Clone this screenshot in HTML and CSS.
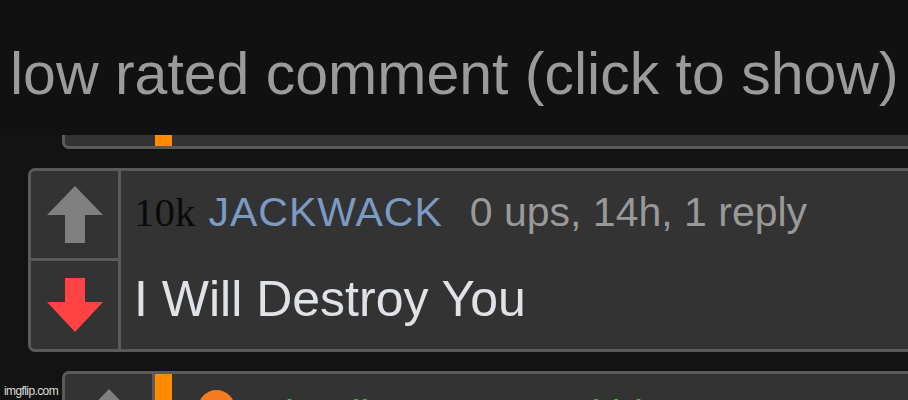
FILE: index.html
```html
<!DOCTYPE html>
<html lang="en">
<head>
    <meta charset="UTF-8">
    <title>Comments</title>
    <link rel="stylesheet" href="styles.css">
</head>
<body>

    <!-- collapsed comment bar -->
    <div class="hidden-bar">low rated comment (click to show)</div>

    <!-- bottom of the reply above -->
    <div class="card-tail">
        <div class="tail-vote"></div>
        <div class="thread-mark"></div>
    </div>

    <!-- comment -->
    <div class="com">
        <div class="vote">
            <div class="vote-btn">
                <svg width="56" height="57" viewBox="0 0 56 57"><polygon points="28,0 56,29 38,29 38,57 18,57 18,29 0,29" fill="#808080"/></svg>
            </div>
            <div class="vote-btn down">
                <svg width="56" height="54" viewBox="0 0 56 54"><polygon points="18,0 38,0 38,24 56,24 28,54 0,24 18,24" fill="#ff4242"/></svg>
            </div>
        </div>
        <div class="com-body">
            <div class="com-meta">
                <span class="rank">10k</span><span class="name">JACKWACK</span><span class="stats">0 ups, 14h, 1 reply</span>
            </div>
            <div class="com-text">I Will Destroy You</div>
        </div>
    </div>

    <!-- reply -->
    <div class="com reply">
        <div class="vote">
            <div class="vote-btn">
                <svg width="56" height="57" viewBox="0 0 56 57"><polygon points="28,0 56,29 38,29 38,57 18,57 18,29 0,29" fill="#808080"/></svg>
            </div>
        </div>
        <div class="thread-mark"></div>
        <div class="com-body reply-body">
            <div class="avatar"></div>
            <span class="green">lorell_maneuver_kid</span>
        </div>
    </div>

    <div class="watermark">imgflip.com</div>

</body>
</html>
```

FILE: styles.css
```css
body {
    margin: 0;
    height: 400px;
    overflow: hidden;
    background: #131313;
    font-family: "Liberation Sans", Arial, sans-serif;
    position: relative;
}
.hidden-bar {
    height: 135px;
    box-sizing: border-box;
    padding: 40px 0 0 10px;
    background: #111111;
    color: #9b9b9b;
    font-size: 59px;
    line-height: 68px;
    white-space: nowrap;
}
.card-tail {
    display: flex;
    height: 11px;
    margin-left: 62px;
    margin-right: -20px;
    background: #333333;
    border-left: 3px solid #5a5a5a;
    border-bottom: 3px solid #5a5a5a;
    border-bottom-left-radius: 7px;
}
.tail-vote {
    width: 90px;
}
.thread-mark {
    width: 17px;
    background: #ff8c00;
}
.com {
    display: flex;
    margin: 19px -20px 0 28px;
    height: 178px;
    background: #333333;
    border: 3px solid #5a5a5a;
    border-radius: 7px;
}
.vote {
    width: 87px;
    border-right: 3px solid #5a5a5a;
    display: flex;
    flex-direction: column;
}
.vote-btn {
    height: 87px;
    display: flex;
    align-items: center;
    justify-content: center;
}
.vote-btn.down {
    flex: 1;
    border-top: 3px solid #5a5a5a;
}
.com-body {
    padding: 18px 0 0 13px;
}
.com-meta {
    font-size: 41px;
    line-height: 47px;
    white-space: nowrap;
}
.rank {
    font-family: "Liberation Serif", "Times New Roman", serif;
    color: #0a0a0a;
    margin-right: 13px;
}
.name {
    color: #7b9ac4;
    letter-spacing: 1px;
}
.stats {
    color: #999999;
    margin-left: 27px;
}
.com-text {
    margin-top: 35px;
    font-size: 50px;
    line-height: 57px;
    color: #dfe2e6;
    white-space: nowrap;
}
.reply {
    margin-left: 62px;
    height: 200px;
}
.reply-body {
    display: flex;
    align-items: flex-start;
    padding: 18px 0 0 26px;
}
.avatar {
    width: 37px;
    height: 37px;
    margin-top: -2px;
    border-radius: 50%;
    background: #f47c20;
}
.green {
    color: #3cba3c;
    font-size: 40px;
    line-height: 46px;
    margin-left: 50px;
    white-space: nowrap;
}
.watermark {
    position: absolute;
    left: 4px;
    bottom: 2px;
    font-size: 12px;
    letter-spacing: -0.6px;
    color: #dddddd;
}
```
